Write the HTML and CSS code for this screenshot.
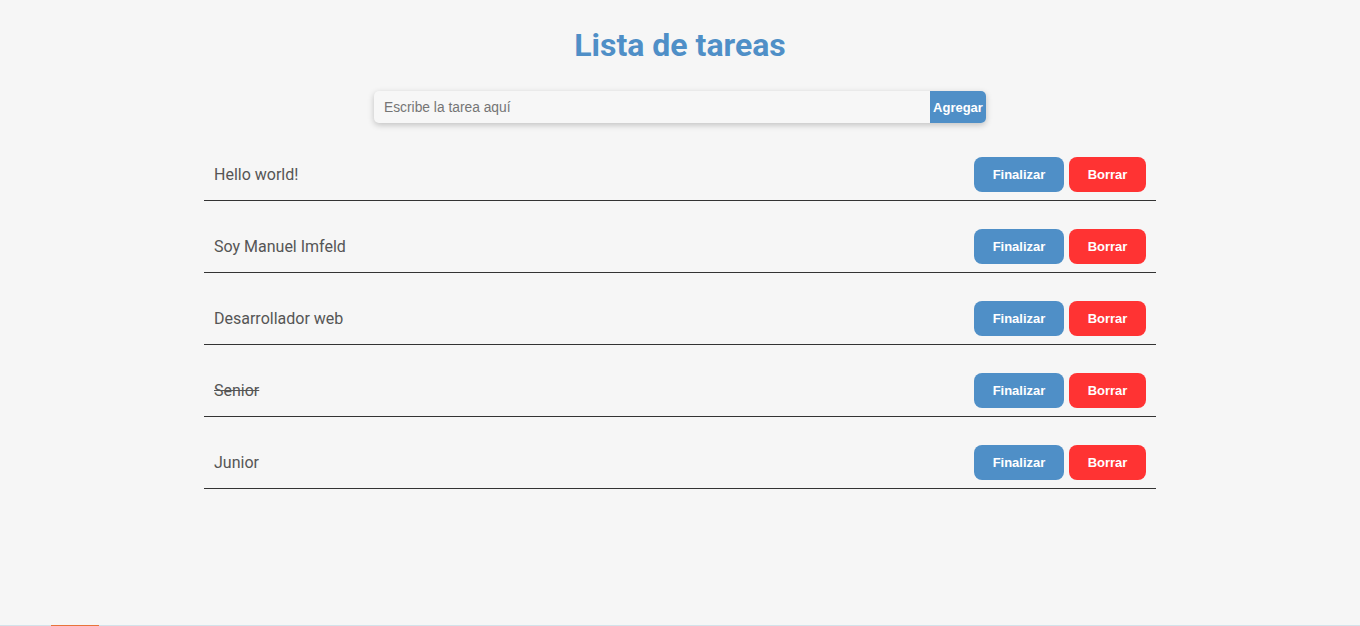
FILE: index.html
```html
<!DOCTYPE html>
<html lang="es">
<head>
<meta charset="utf-8">
<title>Lista de tareas</title>
<link rel="stylesheet" href="styles.css">
</head>
<body>
<main class="app">
  <h1 class="title">Lista de tareas</h1>
  <form class="add-form">
    <input class="add-input" type="text" placeholder="Escribe la tarea aquí">
    <button class="add-btn" type="button">Agregar</button>
  </form>
  <ul class="tasks">
    <li class="task"><span class="task-text">Hello world!</span><div class="actions"><button class="btn btn-done" type="button">Finalizar</button><button class="btn btn-del" type="button">Borrar</button></div></li>
    <li class="task"><span class="task-text">Soy Manuel Imfeld</span><div class="actions"><button class="btn btn-done" type="button">Finalizar</button><button class="btn btn-del" type="button">Borrar</button></div></li>
    <li class="task"><span class="task-text">Desarrollador web</span><div class="actions"><button class="btn btn-done" type="button">Finalizar</button><button class="btn btn-del" type="button">Borrar</button></div></li>
    <li class="task"><span class="task-text done">Senior</span><div class="actions"><button class="btn btn-done" type="button">Finalizar</button><button class="btn btn-del" type="button">Borrar</button></div></li>
    <li class="task"><span class="task-text">Junior</span><div class="actions"><button class="btn btn-done" type="button">Finalizar</button><button class="btn btn-del" type="button">Borrar</button></div></li>
  </ul>
</main>
<div class="bottom-bar"><span class="bottom-mark"></span></div>
</body>
</html>
```

FILE: styles.css
```css
html, body {
  margin: 0;
  padding: 0;
  background: #f6f6f6;
}
body {
  font-family: Roboto, "Liberation Sans", Arial, sans-serif;
}
.app {
  display: flex;
  flex-direction: column;
  align-items: center;
  padding-top: 26px;
}
.title {
  margin: 0 0 27px;
  font-size: 32px;
  line-height: 38px;
  font-weight: 700;
  color: #4f8fc7;
}
.add-form {
  display: flex;
  width: 612px;
  height: 32px;
  border-radius: 5px;
  box-shadow: 0 2px 6px rgba(0, 0, 0, 0.22);
  background: #f7f7f7;
}
.add-input {
  flex: 1;
  min-width: 0;
  border: none;
  outline: none;
  background: transparent;
  padding: 0 10px;
  font-family: "Liberation Sans", Arial, sans-serif;
  font-size: 13.8px;
  color: #333;
  border-radius: 5px 0 0 5px;
}
.add-input::placeholder {
  color: #757575;
}
.add-btn {
  width: 56px;
  padding: 0;
  border: none;
  border-radius: 0 5px 5px 0;
  background: #4f8fc7;
  color: #fff;
  font-family: "Liberation Sans", Arial, sans-serif;
  font-size: 13px;
  font-weight: 700;
}
.tasks {
  list-style: none;
  margin: 26px 0 0;
  padding: 0;
  width: 952px;
  display: flex;
  flex-direction: column;
  gap: 20px;
}
.task {
  display: flex;
  align-items: center;
  justify-content: space-between;
  height: 51px;
  padding: 0 10px;
  border-bottom: 1px solid #333;
}
.task-text {
  font-size: 16px;
  color: #555;
}
.task-text.done {
  text-decoration: line-through;
}
.actions {
  display: flex;
  gap: 5px;
}
.btn {
  height: 35px;
  border: none;
  border-radius: 8px;
  color: #fff;
  font-family: "Liberation Sans", Arial, sans-serif;
  font-size: 13px;
  font-weight: 700;
  padding: 0;
}
.btn-done {
  width: 90px;
  background: #4f8fc7;
}
.btn-del {
  width: 77px;
  background: #ff3333;
}
.bottom-bar {
  position: fixed;
  left: 0;
  right: 0;
  bottom: 0;
  height: 1px;
  background: #d3e2ea;
}
.bottom-mark {
  position: absolute;
  left: 51px;
  width: 48px;
  top: 0;
  height: 1px;
  background: #e8743b;
}
```
